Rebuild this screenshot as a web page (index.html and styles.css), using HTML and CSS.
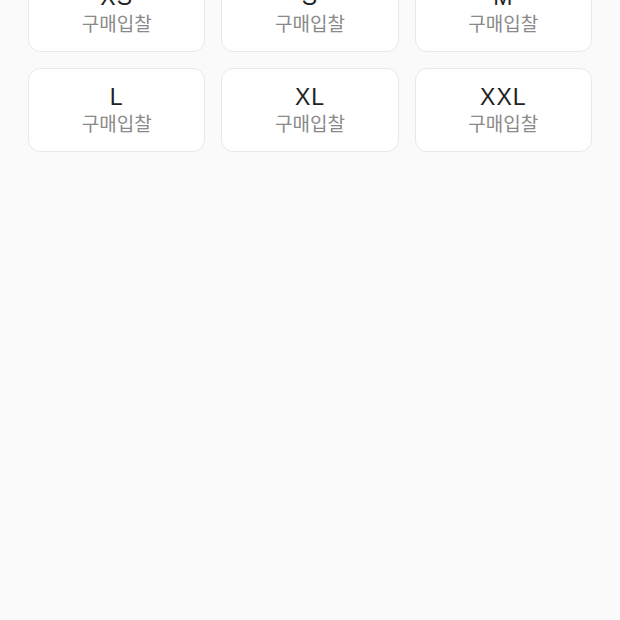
FILE: index.html
```html
<!DOCTYPE html>
<html lang="ko">
<head>
    <meta charset="UTF-8">
    <title>사이즈 선택</title>
    <link rel="stylesheet" href="styles.css">
</head>
<body>

<div class="size-grid">
    <div class="size-card">
        <div class="size-name">XS</div>
        <div class="size-price">구매입찰</div>
    </div>
    <div class="size-card">
        <div class="size-name">S</div>
        <div class="size-price">구매입찰</div>
    </div>
    <div class="size-card">
        <div class="size-name">M</div>
        <div class="size-price">구매입찰</div>
    </div>
    <div class="size-card">
        <div class="size-name">L</div>
        <div class="size-price">구매입찰</div>
    </div>
    <div class="size-card">
        <div class="size-name">XL</div>
        <div class="size-price">구매입찰</div>
    </div>
    <div class="size-card">
        <div class="size-name">XXL</div>
        <div class="size-price">구매입찰</div>
    </div>
</div>

</body>
</html>
```

FILE: styles.css
```css
body {
    margin: 0;
    font-family: 'Liberation Sans', 'Noto Sans CJK KR', sans-serif;
    background-color: #fafafa;
    color: #222;
}
.size-grid {
    display: grid;
    grid-template-columns: repeat(3, 1fr);
    gap: 16px;
    padding: 0 28px;
    margin-top: -32px;
}
.size-card {
    height: 84px;
    box-sizing: border-box;
    background-color: #fff;
    border: 1px solid #e8e8e8;
    border-radius: 12px;
    display: flex;
    flex-direction: column;
    align-items: center;
    justify-content: center;
    padding-top: 1px;
}
.size-name {
    font-size: 23px;
    line-height: 28px;
    letter-spacing: 1px;
    color: #222;
}
.size-price {
    font-size: 19px;
    line-height: 28px;
    color: #8a8a8a;
}
```
